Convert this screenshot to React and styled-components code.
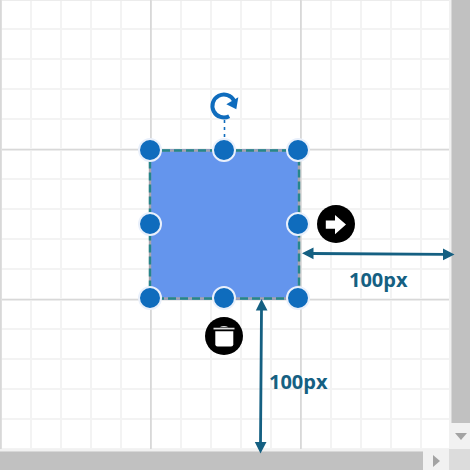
import React from 'react';
import styled, { createGlobalStyle } from 'styled-components';

const GlobalStyle = createGlobalStyle`
  * { box-sizing: border-box; }
  body { margin: 0; overflow: hidden; background: #f1f1f1; font-family: "Open Sans", "Noto Sans", sans-serif; }
  button { padding: 0; border: 0; cursor: pointer; }
`;

const Viewport = styled.main`
  display: grid;
  grid-template-columns: minmax(0, 1fr) 21px;
  grid-template-rows: minmax(0, 1fr) 21px;
  height: 100vh;
  background: #f1f1f1;
`;

const Canvas = styled.section`
  position: relative;
  background-color: #fff;
  background-image:
    linear-gradient(90deg, #d8d8d8 1px, #dfdfdf 1px, #dfdfdf 2px, transparent 2px),
    linear-gradient(#d8d8d8 1px, #ececec 1px, #ececec 2px, transparent 2px),
    linear-gradient(90deg, #f3f3f3 2px, transparent 2px),
    linear-gradient(#f3f3f3 2px, transparent 2px);
  background-size: 150px 150px, 150px 150px, 30px 30px, 30px 30px;
  background-position: 0 0, 0 -1px, 0 0, 0 -2px;
`;

const Node = styled.div`
  position: absolute;
  left: 149px;
  top: 149px;
  width: 151px;
  height: 151px;
  background: #6495ed;
`;

const Drawing = styled.svg`
  position: absolute;
  left: 0;
  top: 0;
  overflow: visible;
  pointer-events: none;
`;

const Handle = styled.button`
  position: absolute;
  left: ${({ $x }) => $x}px;
  top: ${({ $y }) => $y}px;
  width: 24px;
  height: 24px;
  transform: translate(-50%, -50%);
  border: 2px solid #e9f0fb;
  border-radius: 50%;
  background: #0f6cbd;
`;

const Tool = styled.button`
  position: absolute;
  left: ${({ $x }) => $x}px;
  top: ${({ $y }) => $y}px;
  width: 38px;
  height: 38px;
  border-radius: 50%;
  background: ${({ $plain }) => ($plain ? 'transparent' : '#000')};
  svg { display: block; }
`;

const Measure = styled.span`
  position: absolute;
  left: ${({ $x }) => $x}px;
  top: ${({ $y }) => $y}px;
  color: #156082;
  font-size: 20px;
  line-height: 24px;
  font-weight: 700;
  white-space: nowrap;
`;

const Scrollbar = styled.div`
  display: flex;
  min-width: 0;
  min-height: 0;
  flex-direction: ${({ $vertical }) => ($vertical ? 'column' : 'row')};
  padding: ${({ $vertical }) => ($vertical ? '0 0 0 2px' : '2px 0 0')};
`;

const Thumb = styled.div`
  flex: 1;
  background: #c1c1c1;
  border: 0 solid #d8d8d8;
  border-width: ${({ $vertical }) => ($vertical ? '0 0 0 1px' : '1px 0 0')};
`;

const ScrollButton = styled.button`
  display: flex;
  flex: 0 0 26px;
  align-items: center;
  justify-content: center;
  background: #f1f1f1;
`;

const Corner = styled.div`
  background: #dcdcdc;
`;

const handles = [
  ['top left', 150, 150], ['top', 224, 150], ['top right', 298, 150],
  ['left', 150, 224], ['right', 298, 224],
  ['bottom left', 150, 298], ['bottom', 224, 298], ['bottom right', 298, 298],
];

export default function App() {
  return (
    <>
      <GlobalStyle />
      <Viewport>
        <Canvas aria-label="Diagram">
          <Node />
          <Drawing width="449" height="449" aria-hidden="true">
            <rect x="150" y="150.5" width="149" height="148" fill="none" stroke="#a7a3ac" strokeWidth="2.4" />
            <rect x="150" y="150.5" width="149" height="148" fill="none" stroke="#26868a" strokeWidth="2.4" strokeDasharray="8 4" />
            <path d="M224.5 120V140" stroke="#0f6cbd" strokeWidth="1.6" strokeDasharray="3 4" />
          </Drawing>
          {handles.map(([name, x, y]) => (
            <Handle key={name} $x={x} $y={y} aria-label={`Resize ${name}`} />
          ))}
          <Tool $x={205} $y={87} $plain aria-label="Rotate">
            <svg width="38" height="38" viewBox="0 0 38 38">
              <path d="M24.2 29.2A11.5 11.5 0 1 1 29.2 13.8" fill="none" stroke="#0f6cbd" strokeWidth="4" />
              <path d="M33.3 10.3L31.3 22.3L21.3 17.3Z" fill="#0f6cbd" />
            </svg>
          </Tool>
          <Tool $x={317} $y={205} aria-label="Connect">
            <svg width="38" height="38" viewBox="0 0 38 38">
              <path d="M8.8 15.6H18V10L29 19.6L18 29.2V23.7H8.8Z" fill="#fff" />
            </svg>
          </Tool>
          <Tool $x={205} $y={317} aria-label="Delete">
            <svg width="38" height="38" viewBox="0 0 38 38">
              <path d="M8.5 11.6h21" stroke="#ddd" strokeWidth="1.7" />
              <path d="M14.5 10.2Q19 7.8 23.5 10.2Z" fill="#ddd" />
              <path d="M10.3 14.2h18v13q0 2.3-2.3 2.3H12.6q-2.3 0-2.3-2.3Z" fill="#fff" />
            </svg>
          </Tool>
          <Drawing width="449" height="449" aria-hidden="true">
            <g fill="#156082" stroke="none">
              <path d="M302 253.2L313.5 247.5V259.2Z M454.5 254.4L443 248.5V260.3Z" />
              <path d="M261.5 299L255.8 310.5H267.5Z M260.5 453.5L254.8 442H266.5Z" />
            </g>
            <path d="M312 253.5L445 254.3M261.5 309L260.5 443" fill="none" stroke="#156082" strokeWidth="2.8" />
          </Drawing>
          <Measure $x={349} $y={268}>100px</Measure>
          <Measure $x={269} $y={370}>100px</Measure>
        </Canvas>
        <Scrollbar $vertical>
          <Thumb $vertical />
          <ScrollButton aria-label="Scroll down">
            <svg width="12" height="7" viewBox="0 0 12 7"><path d="M0 0H12L6 7Z" fill="#a3a3a3" /></svg>
          </ScrollButton>
        </Scrollbar>
        <Scrollbar>
          <Thumb />
          <ScrollButton aria-label="Scroll right">
            <svg width="7" height="12" viewBox="0 0 7 12"><path d="M0 0V12L7 6Z" fill="#a3a3a3" /></svg>
          </ScrollButton>
        </Scrollbar>
        <Corner />
      </Viewport>
    </>
  );
}
